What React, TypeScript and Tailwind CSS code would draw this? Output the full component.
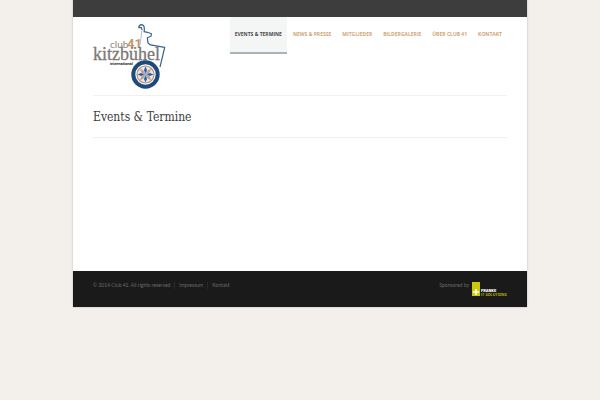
interface NavItem {
  label: string
  href: string
  active?: boolean
}

const navItems: NavItem[] = [
  { label: "Events & Termine", href: "#events", active: true },
  { label: "News & Presse", href: "#news" },
  { label: "Mitglieder", href: "#mitglieder" },
  { label: "Bildergalerie", href: "#galerie" },
  { label: "Über Club 41", href: "#club" },
  { label: "Kontakt", href: "#kontakt" },
]

const spokes = [0, 45, 90, 135, 180, 225, 270, 315]

const ClubLogo = () => (
  <svg viewBox="0 0 74 66" className="h-[66px] w-[74px]" role="img" aria-label="Club 41 Kitzbühel International">
    <path d="M47 21 L49 6" fill="none" stroke="#a9c0d6" strokeWidth="1" />
    <path
      d="M49 6 L48.5 3.5 L45.7 3.6 Q46 0.7 48.7 0.6 Q51.5 1 51.3 5 L51.2 7.7 L54.3 8.3 L58.5 9.7 L58 12.2 L54.3 13.7 L55 19 L57.5 20.9 L71.7 23.3 L67 43"
      fill="none"
      stroke="#3c6389"
      strokeWidth="1.2"
      strokeLinejoin="round"
    />
    <text x="17" y="24" fontSize="10" fill="#8b8581" className="font-['Lato',sans-serif]">club</text>
    <text x="34" y="24" fontSize="13" fill="#c8936b" className="font-['Roboto',sans-serif] font-bold">41</text>
    <text x="0" y="36" fontSize="18" fill="#7d7875" stroke="#7d7875" strokeWidth="0.3" className="font-['Liberation_Serif',serif]">kitzbühel</text>
    <text x="17" y="41" fontSize="4" fill="#222" className="font-['Roboto',sans-serif] font-bold">international</text>
    <circle cx="52.5" cy="50.5" r="12.2" fill="#fff" stroke="#1d4a7c" strokeWidth="4" />
    <circle cx="52.5" cy="50.5" r="8.5" fill="#e6e8ec" stroke="#b98d78" strokeWidth="1.2" />
    {spokes.map((angle) => (
      <path
        key={angle}
        d="M52.5 50.5 L51 46 L52.5 42.5 L54 46 Z"
        fill={angle % 90 === 0 ? "#2d609b" : "#c3a08d"}
        transform={`rotate(${angle} 52.5 50.5)`}
      />
    ))}
    <circle cx="52.5" cy="50.5" r="2" fill="#8fb0d3" />
  </svg>
)

const SponsorLogo = () => (
  <svg viewBox="0 0 35 14" className="h-[14px] w-[35px]" role="img" aria-label="Franke IT Solutions">
    <rect width="8" height="14" fill="#cdc70f" />
    <path d="M4 7v6M1 10h6" stroke="#fff" strokeWidth="1.5" />
    <text x="9" y="10" fontSize="4" fill="#fff" className="font-['Roboto',sans-serif] font-black">FRANKE</text>
    <text x="9" y="14" fontSize="4" fill="#cdc70f" className="font-['Roboto',sans-serif] font-medium">IT SOLUTIONS</text>
  </svg>
)

const App = () => {
  return (
    <div className="min-h-screen bg-[#f3f0eb] px-4 font-['Open_Sans',sans-serif]">
      <div className="mx-auto max-w-[454px] bg-white shadow-[0_0_2px_rgba(0,0,0,0.25)]">
        <div className="h-[17px] bg-[#3d3d3d]" />

        <div className="px-5">
          <header className="flex items-start justify-between border-b border-[#f0f0f0] pb-[5px]">
            <a href="#home" className="mt-[7px] block">
              <ClubLogo />
            </a>
            <nav className="flex gap-px">
              {navItems.map((item) => (
                <a
                  key={item.label}
                  href={item.href}
                  aria-current={item.active ? "page" : undefined}
                  className={`border-b-2 px-[5px] text-[5px] leading-[35px] font-bold whitespace-nowrap uppercase ${
                    item.active
                      ? "border-[#a9b5bd] bg-[#f4f5f5] text-[#4a4a4a]"
                      : "border-transparent text-[#cfa678]"
                  }`}
                >
                  {item.label}
                </a>
              ))}
            </nav>
          </header>

          <main className="min-h-[175px]">
            <h1 className="border-b border-[#f0f0f0] pt-[11px] pb-[9px] font-['DejaVu_Serif_Condensed','DejaVu_Serif',serif] text-[12px] leading-[21px] text-[#3d3d3d]">
              Events &amp; Termine
            </h1>
          </main>
        </div>

        <footer className="flex items-start justify-between bg-[#1a1a1a] px-5 pt-[11px] pb-[11px] font-['Lato',sans-serif] text-[5px] leading-[7px] text-[#6b6b6b]">
          <div className="flex">
            <span className="pr-1">© 2014 Club 41. All rights reserved</span>
            <a href="#impressum" className="border-l border-[#2a2a2a] px-1">Impressum</a>
            <a href="#kontakt" className="border-l border-[#2a2a2a] px-1">Kontakt</a>
          </div>
          <div className="flex gap-[3px]">
            <span>Sponsored by</span>
            <a href="#sponsor">
              <SponsorLogo />
            </a>
          </div>
        </footer>
      </div>
    </div>
  )
}

export default App
